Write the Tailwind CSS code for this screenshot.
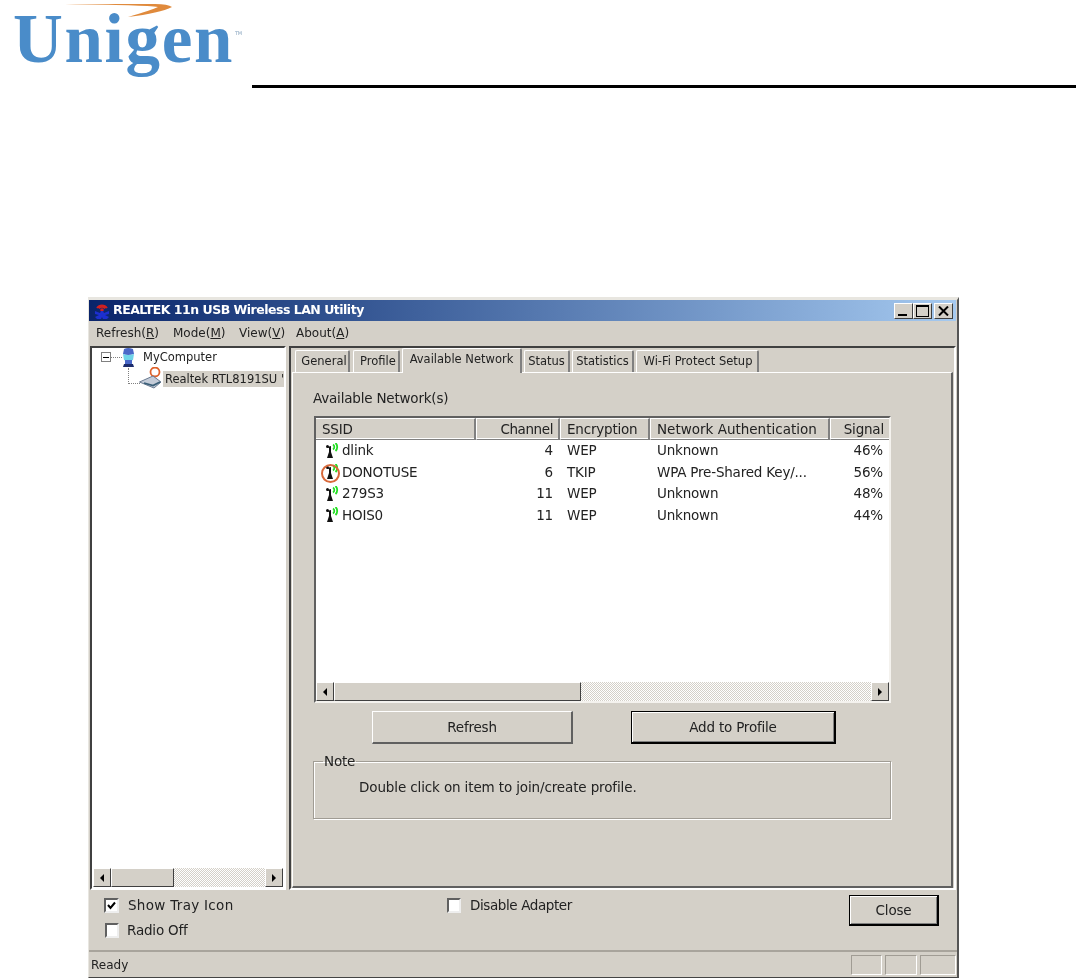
<!DOCTYPE html>
<html lang="en">
<head>
  <meta charset="UTF-8" />
  <title>REALTEK 11n USB Wireless LAN Utility</title>
  <script src="https://cdn.jsdelivr.net/npm/@tailwindcss/browser@4"></script>
</head>
<body class="bg-white w-[1076px] h-[978px] overflow-hidden font-['DejaVu_Sans',sans-serif] text-[13.500px] tracking-[-0.200px] text-[#222]">

  <!-- Page header with logo -->
  <header class="h-[297px] flex items-start">
    <div class="relative w-[252px] h-[85px] shrink-0 blur-[0.6px]">
      <svg class="absolute left-[60px] top-[1px]" width="120" height="18" viewBox="0 0 120 18"><path d="M5 3 L95 3 Q108 3 112 6 Q100 12 68 16 Q92 9 98 6 Q85 4 5 3 Z" fill="#e08a3c"/></svg>
      <span class="absolute left-[13px] top-[-1px] text-[69px] leading-[80px] font-bold font-['Liberation_Serif',serif] text-[#4a8cc9] tracking-[1.700px]">Unigen</span>
      <span class="absolute left-[235px] top-[31px] text-[5px] leading-[5px] text-[#8aa6c0]">TM</span>
    </div>
    <div class="mt-[85px] h-[3px] flex-1 bg-black"></div>
  </header>

  <!-- Utility window -->
  <div class="ml-[88px] w-[871px] h-[681px] bg-[#d4d0c8] border-t-[3px] border-l border-r-2 border-b border-t-[#e8e6e0] border-l-[#e8e6e0] border-r-[#555] border-b-[#444] flex flex-col blur-[0.5px]">

    <!-- Title bar -->
    <div class="h-[21px] mr-[1px] shrink-0 flex items-center bg-gradient-to-r from-[#0a246a] to-[#a6caf0] pl-[3px] pr-[3px]">
      <svg width="20" height="18" viewBox="0 0 20 18" class="shrink-0">
        <path d="M5 6 A6 6 0 0 1 15 6 M7 6.500 A3.500 3.500 0 0 1 13 6.500" fill="none" stroke="#d02020" stroke-width="1.800"/>
        <circle cx="10" cy="8" r="1.800" fill="#d02020"/>
        <path d="M9 9 H11 L12 11 L17 9 V12 L13 13 L17 15 L15 17 H11 L10 15 L9 17 H5 L3 15 L7 13 L3 12 V9 L8 11 Z" fill="#1c2fd0"/>
      </svg>
      <span class="ml-[1px] text-white font-bold text-[12.500px] leading-none tracking-[-0.500px]">REALTEK 11n USB Wireless LAN Utility</span>
      <div class="ml-auto flex gap-0">
        <button class="w-[19px] h-[16px] bg-[#d4d0c8] border-t border-l border-white border-r border-b border-r-[#404040] border-b-[#404040] flex items-end justify-start pl-[3px] pb-[2px]"><span class="block w-[9px] h-[2px] bg-black"></span></button>
        <button class="w-[19px] h-[16px] bg-[#d4d0c8] border-t border-l border-white border-r border-b border-r-[#404040] border-b-[#404040] flex items-center justify-center"><span class="block w-[13px] h-[12px] border border-black border-t-2"></span></button>
        <button class="ml-[2px] w-[19px] h-[16px] bg-[#d4d0c8] border-t border-l border-white border-r border-b border-r-[#404040] border-b-[#404040] flex items-center justify-center">
          <svg width="11" height="10" viewBox="0 0 11 10"><path d="M1 0.500 L10 9.500 M10 0.500 L1 9.500" stroke="#000" stroke-width="2"/></svg>
        </button>
      </div>
    </div>

    <!-- Menu bar -->
    <nav class="h-[25px] shrink-0 relative text-[12px] tracking-normal leading-[24px]">
      <div class="flex pl-[7px]">
        <span class="w-[77px]">Refresh(<u>R</u>)</span>
        <span class="w-[66px]">Mode(<u>M</u>)</span>
        <span class="w-[57px]">View(<u>V</u>)</span>
        <span>About(<u>A</u>)</span>
      </div>
    </nav>

    <!-- Tree pane and tab pane -->
    <div class="h-[544px] shrink-0 flex pl-[1px]">

      <!-- Tree pane -->
      <aside class="w-[196px] h-full border-2 border-t-[#404040] border-l-[#404040] border-r-white border-b-white bg-white flex flex-col">
        <div class="flex-1 relative overflow-hidden text-[11.500px] tracking-normal">
          <div class="absolute left-[9px] top-[4px] w-[10px] h-[10px] border border-[#808080] bg-white flex items-center justify-center"><span class="block w-[6px] h-px bg-black"></span></div>
          <div class="absolute left-[19px] top-[9px] w-[11px] border-t border-dotted border-[#808080]"></div>
          <div class="absolute left-[36px] top-[20px] w-[12px] h-[16px] border-l border-b border-dotted border-[#808080]"></div>
          <svg class="absolute left-[29px] top-[0px]" width="15" height="20" viewBox="0 0 15 20">
            <path d="M3 1 Q7 -1 12 1 L13 6 Q7 8 2 6 Z" fill="#4a68c8"/>
            <path d="M2 6 Q7 8 13 6 L12 12 Q7 14 3 12 Z" fill="#6fd4e8"/>
            <path d="M4 12 H11 L11 16 H4 Z" fill="#4a68c8"/>
            <path d="M3 16 H12 L13 19 H2 Z" fill="#1c2c6c"/>
          </svg>
          <span class="absolute left-[51px] top-[0px] leading-[18px]">MyComputer</span>
          <svg class="absolute left-[47px] top-[19px]" width="24" height="22" viewBox="0 0 24 22">
            <circle cx="16" cy="5" r="4.500" fill="none" stroke="#e0622a" stroke-width="1.800"/>
            <path d="M0.500 15 L14 9 L22 15 L15 21 Z" fill="#c4ccd8" stroke="#6a7a90" stroke-width="1"/>
            <path d="M5 16 L14 18.500 L21 15" fill="none" stroke="#3a5f78" stroke-width="1.800"/>
          </svg>
          <div class="absolute left-[71px] top-[23px] right-0 h-[16px] bg-[#d4d0c8] pl-[2px] leading-[16px] whitespace-nowrap">Realtek RTL8191SU '</div>
        </div>
        <!-- Horizontal scrollbar -->
        <div class="h-[19px] mb-[1px] ml-[1px] mr-[1px] flex bg-[repeating-conic-gradient(#fff_0_25%,#d4d0c8_0_50%)] bg-[length:2px_2px] shrink-0">
          <button class="w-[18px] bg-[#d4d0c8] border-t border-l border-white border-r border-b border-r-[#404040] border-b-[#404040] flex items-center justify-center"><span class="block w-0 h-0 border-y-[4px] border-y-transparent border-r-[4px] border-r-black"></span></button>
          <div class="w-[63px] bg-[#d4d0c8] border-t border-l border-white border-r border-b border-r-[#404040] border-b-[#404040]"></div>
          <button class="ml-auto w-[18px] bg-[#d4d0c8] border-t border-l border-white border-r border-b border-r-[#404040] border-b-[#404040] flex items-center justify-center"><span class="block w-0 h-0 border-y-[4px] border-y-transparent border-l-[4px] border-l-black"></span></button>
        </div>
      </aside>

      <!-- Tab pane -->
      <section class="ml-[3px] w-[667px] h-full border-2 border-t-[#404040] border-l-[#404040] border-r-white border-b-white flex flex-col">
        <div class="h-[24px] shrink-0 flex items-end pl-[4px] text-[11.500px] tracking-normal relative z-10">
          <button class="w-[55px] h-[22px] pl-[4px] bg-[#d4d0c8] border-t border-l border-white border-r-2 border-r-[#808080] rounded-t-[2px] mr-[3px]">General</button>
          <button class="w-[47px] h-[22px] pl-[4px] bg-[#d4d0c8] border-t border-l border-white border-r-2 border-r-[#808080] rounded-t-[2px] mr-[2px]">Profile</button>
          <button class="w-[120px] h-[25px] -mb-[1px] pb-[3px] bg-[#d4d0c8] border-t border-l border-white border-r-2 border-r-[#808080] rounded-t-[2px] mr-[2px]">Available Network</button>
          <button class="w-[46px] h-[22px] bg-[#d4d0c8] border-t border-l border-white border-r-2 border-r-[#808080] rounded-t-[2px] mr-[2px]">Status</button>
          <button class="w-[62px] h-[22px] bg-[#d4d0c8] border-t border-l border-white border-r-2 border-r-[#808080] rounded-t-[2px] mr-[2px]">Statistics</button>
          <button class="w-[123px] h-[22px] pl-[2px] bg-[#d4d0c8] border-t border-l border-white border-r-2 border-r-[#808080] rounded-t-[2px]">Wi-Fi Protect Setup</button>
        </div>

        <!-- Tab page -->
        <div class="ml-[1px] w-[661px] flex-1 border-t border-l border-white border-r-2 border-b-2 border-r-[#606060] border-b-[#606060] pl-[20px]">
          <div class="mt-[17px] h-[17px] leading-[17px]">Available Network(s)</div>

          <!-- Network list -->
          <div class="mt-[9px] ml-[1px] w-[577px] h-[287px] border-2 border-t-[#606060] border-l-[#606060] border-r-[#f4f2ee] border-b-[#f4f2ee] bg-white flex flex-col">
            <div class="h-[20px] shrink-0 grid grid-cols-[160px_84px_90px_180px_59px] bg-[#d4d0c8] leading-[20px] whitespace-nowrap">
              <div class="pl-[6px] border-r-2 border-b border-[#808080] border-t border-t-white">SSID</div>
              <div class="pr-[5px] text-right border-r-2 border-b border-[#808080] border-t border-t-white border-l border-l-white tracking-[-0.400px]">Channel</div>
              <div class="pl-[6px] border-r-2 border-b border-[#808080] border-t border-t-white border-l border-l-white">Encryption</div>
              <div class="pl-[6px] border-r-2 border-b border-[#808080] border-t border-t-white border-l border-l-white tracking-normal">Network Authentication</div>
              <div class="pr-[5px] text-right border-b border-[#808080] border-t border-t-white border-l border-l-white">Signal</div>
            </div>
            <div class="flex-1 pt-[2px] leading-[21.5px]">
              <div class="grid grid-cols-[160px_84px_90px_180px_59px] h-[21.500px]">
                <div class="flex items-center pl-[9px] gap-[1px]">
                  <svg width="16" height="16" viewBox="0 0 16 16"><circle cx="2.500" cy="3.500" r="1.500" fill="#111"/><path d="M2 4 L6 3 L6 9 L8 15 H2 L4 9 L4 5 Z" fill="#111"/><path d="M8 1.500 A3 3 0 0 1 8 6.500 M10.500 0 A5.500 5.500 0 0 1 10.500 8 M9 4 H9.500" fill="none" stroke="#22dd22" stroke-width="1.800"/></svg>
                  <span>dlink</span>
                </div>
                <div class="text-right pr-[7px]">4</div><div class="pl-[7px]">WEP</div><div class="pl-[7px]">Unknown</div><div class="text-right pr-[6px]">46%</div>
              </div>
              <div class="grid grid-cols-[160px_84px_90px_180px_59px] h-[21.500px]">
                <div class="flex items-center pl-[9px] gap-[1px] relative">
                  <span class="absolute left-[5px] top-[2px] w-[19px] h-[19px] rounded-full border-2 border-[#d8683a]"></span>
                  <svg width="16" height="16" viewBox="0 0 16 16"><circle cx="2.500" cy="3.500" r="1.500" fill="#111"/><path d="M2 4 L6 3 L6 9 L8 15 H2 L4 9 L4 5 Z" fill="#111"/><path d="M8 1.500 A3 3 0 0 1 8 6.500 M10.500 0 A5.500 5.500 0 0 1 10.500 8 M9 4 H9.500" fill="none" stroke="#22dd22" stroke-width="1.800"/></svg>
                  <span>DONOTUSE</span>
                </div>
                <div class="text-right pr-[7px]">6</div><div class="pl-[7px]">TKIP</div><div class="pl-[7px] whitespace-nowrap">WPA Pre-Shared Key/...</div><div class="text-right pr-[6px]">56%</div>
              </div>
              <div class="grid grid-cols-[160px_84px_90px_180px_59px] h-[21.500px]">
                <div class="flex items-center pl-[9px] gap-[1px]">
                  <svg width="16" height="16" viewBox="0 0 16 16"><circle cx="2.500" cy="3.500" r="1.500" fill="#111"/><path d="M2 4 L6 3 L6 9 L8 15 H2 L4 9 L4 5 Z" fill="#111"/><path d="M8 1.500 A3 3 0 0 1 8 6.500 M10.500 0 A5.500 5.500 0 0 1 10.500 8 M9 4 H9.500" fill="none" stroke="#22dd22" stroke-width="1.800"/></svg>
                  <span>279S3</span>
                </div>
                <div class="text-right pr-[7px]">11</div><div class="pl-[7px]">WEP</div><div class="pl-[7px]">Unknown</div><div class="text-right pr-[6px]">48%</div>
              </div>
              <div class="grid grid-cols-[160px_84px_90px_180px_59px] h-[21.500px]">
                <div class="flex items-center pl-[9px] gap-[1px]">
                  <svg width="16" height="16" viewBox="0 0 16 16"><circle cx="2.500" cy="3.500" r="1.500" fill="#111"/><path d="M2 4 L6 3 L6 9 L8 15 H2 L4 9 L4 5 Z" fill="#111"/><path d="M8 1.500 A3 3 0 0 1 8 6.500 M10.500 0 A5.500 5.500 0 0 1 10.500 8 M9 4 H9.500" fill="none" stroke="#22dd22" stroke-width="1.800"/></svg>
                  <span>HOIS0</span>
                </div>
                <div class="text-right pr-[7px]">11</div><div class="pl-[7px]">WEP</div><div class="pl-[7px]">Unknown</div><div class="text-right pr-[6px]">44%</div>
              </div>
            </div>
            <!-- List scrollbar -->
            <div class="h-[19px] shrink-0 flex bg-[repeating-conic-gradient(#fff_0_25%,#d4d0c8_0_50%)] bg-[length:2px_2px]">
              <button class="w-[18px] bg-[#d4d0c8] border-t border-l border-white border-r border-b border-r-[#404040] border-b-[#404040] flex items-center justify-center"><span class="block w-0 h-0 border-y-[4px] border-y-transparent border-r-[4px] border-r-black"></span></button>
              <div class="w-[247px] bg-[#d4d0c8] border-t border-l border-white border-r border-b border-r-[#404040] border-b-[#404040]"></div>
              <button class="ml-auto w-[18px] bg-[#d4d0c8] border-t border-l border-white border-r border-b border-r-[#404040] border-b-[#404040] flex items-center justify-center"><span class="block w-0 h-0 border-y-[4px] border-y-transparent border-l-[4px] border-l-black"></span></button>
            </div>
          </div>

          <!-- Actions -->
          <div class="mt-[8px] ml-[59px] flex">
            <button class="w-[201px] h-[33px] bg-[#d4d0c8] border-t border-l border-white border-r-2 border-b-2 border-r-[#606060] border-b-[#606060]">Refresh</button>
            <button class="ml-[58px] w-[205px] h-[33px] bg-[#d4d0c8] border border-black border-r-2 border-b-2 shadow-[inset_1px_1px_0_#fff,inset_-1px_-1px_0_#808080]">Add to Profile</button>
          </div>

          <!-- Note group -->
          <fieldset class="mt-[10px] w-[578px] h-[65px] border border-[#a09c94] shadow-[1px_1px_0_#fff,inset_1px_1px_0_#fff] pl-[45px]">
            <legend class="ml-[-36px] px-[1px] leading-[14px]">Note</legend>
            <p class="mt-[10px] leading-[18px] tracking-[-0.130px]">Double click on item to join/create profile.</p>
          </fieldset>
        </div>
      </section>
    </div>

    <!-- Options row -->
    <div class="h-[60px] shrink-0 flex relative">
      <div class="pl-[15px] pt-[8px] w-[358px]">
        <label class="flex items-center h-[15px] gap-[9px]">
          <span class="w-[15px] h-[15px] bg-white border-2 border-t-[#606060] border-l-[#606060] border-r-[#eee] border-b-[#eee] flex items-center justify-center"><svg width="9" height="9" viewBox="0 0 9 9"><path d="M1 4 L3.500 7 L8 1.500" fill="none" stroke="#000" stroke-width="2"/></svg></span>
          <span class="tracking-[0.300px]">Show Tray Icon</span>
        </label>
        <label class="flex items-center h-[15px] gap-[8px] mt-[10px] ml-[1px]">
          <span class="w-[14px] h-[15px] bg-white border-2 border-t-[#606060] border-l-[#606060] border-r-[#eee] border-b-[#eee]"></span>
          <span>Radio Off</span>
        </label>
      </div>
      <div class="pt-[8px]">
        <label class="flex items-center h-[15px] gap-[9px]">
          <span class="w-[14px] h-[15px] bg-white border-2 border-t-[#606060] border-l-[#606060] border-r-[#eee] border-b-[#eee]"></span>
          <span class="tracking-[-0.400px]">Disable Adapter</span>
        </label>
      </div>
      <button class="absolute left-[760px] top-[5px] w-[90px] h-[31px] bg-[#d4d0c8] border border-black border-r-2 border-b-2 shadow-[inset_1px_1px_0_#fff,inset_-1px_-1px_0_#808080]">Close</button>
    </div>

    <!-- Status bar -->
    <footer class="flex-1 border-t-2 border-t-[#a8a49c] flex items-center pl-[2px] pr-[1px] relative text-[12px] tracking-normal">
      <span>Ready</span>
      <div class="ml-auto flex gap-[3px]">
        <span class="w-[31px] h-[20px] border border-t-[#a09c94] border-l-[#a09c94] border-r-white border-b-white"></span>
        <span class="w-[32px] h-[20px] border border-t-[#a09c94] border-l-[#a09c94] border-r-white border-b-white"></span>
        <span class="w-[36px] h-[20px] border border-t-[#a09c94] border-l-[#a09c94] border-r-white border-b-white"></span>
      </div>
    </footer>
  </div>
</body>
</html>
